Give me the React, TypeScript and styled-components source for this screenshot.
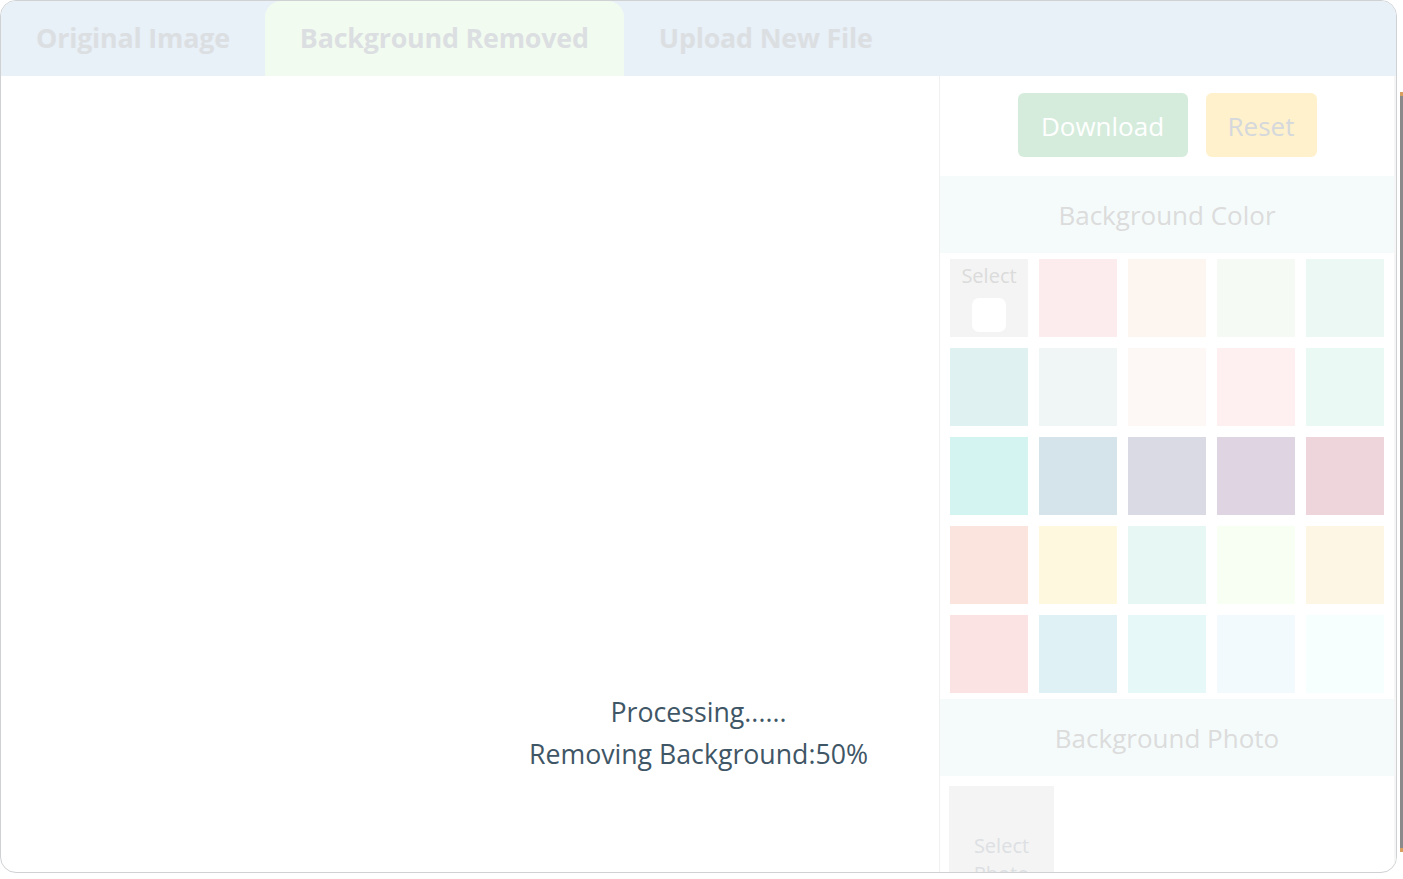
import React from "react";
import styled, { createGlobalStyle } from "styled-components";

const Global = createGlobalStyle`
  html, body { margin: 0; padding: 0; background: #ffffff; }
  body { font-family: "Open Sans", "Noto Sans", sans-serif; overflow: hidden; }
  * { box-sizing: border-box; }
`;

const Page = styled.div`
  display: flex;
  width: 1403px;
  height: 879px;
`;

const Card = styled.div`
  position: relative;
  width: 1397px;
  height: 873px;
  border: 1px solid #cfd1d3;
  border-radius: 16px;
  overflow: hidden;
  display: flex;
  flex-direction: column;
  background: #ffffff;
`;

const Edge = styled.div`
  flex: 1;
  display: flex;
  justify-content: flex-end;
  padding: 92px 0 30px;
`;

const EdgeLine = styled.div`
  width: 3px;
  height: 760px;
  background: #8a8a8a;
  border-top: 4px solid #d8a060;
  border-bottom: 4px solid #d8a060;
`;

const TabBar = styled.div`
  display: flex;
  height: 75px;
  flex-shrink: 0;
  background: #e8f0f8;
`;

const Tab = styled.div<{ $active?: boolean }>`
  display: flex;
  align-items: center;
  padding: 0 35px 2px;
  font-size: 26.85px;
  font-weight: 700;
  color: #dcdfe2;
  background: ${(p) => (p.$active ? "#f2fbf0" : "transparent")};
  border-radius: 16px 16px 0 0;
  letter-spacing: -0.2px;
`;

const Body = styled.div`
  flex: 1;
  display: flex;
  min-height: 0;
`;

const Preview = styled.div`
  width: 939px;
  border-right: 1px solid #f0f0f0;
`;

const Side = styled.div`
  flex: 1;
  overflow: hidden;
  display: flex;
  flex-direction: column;
  border-right: 2px solid #f6f6f6;
`;

const Actions = styled.div`
  display: flex;
  justify-content: center;
  gap: 18px;
  padding: 17px 0 19px;
`;

const Button = styled.div<{ $bg: string; $fg: string; $w: number }>`
  width: ${(p) => p.$w}px;
  height: 64px;
  border-radius: 6px;
  background: ${(p) => p.$bg};
  color: ${(p) => p.$fg};
  font-size: 26px;
  display: flex;
  align-items: center;
  justify-content: center;
  padding-top: 2px;
`;

const SectionHead = styled.div`
  height: 77px;
  flex-shrink: 0;
  background: #f5fbfb;
  color: #dcdcdc;
  font-size: 26px;
  display: flex;
  align-items: center;
  justify-content: center;
`;

const Grid = styled.div`
  display: grid;
  grid-template-columns: repeat(5, 78px);
  grid-auto-rows: 78px;
  column-gap: 11px;
  row-gap: 11px;
  padding: 6px 10px;
  justify-content: space-between;
`;

const Swatch = styled.div<{ $c: string }>`
  background: ${(p) => p.$c};
`;

const SelectCell = styled.div`
  background: #f4f4f4;
  display: flex;
  flex-direction: column;
  align-items: center;
  padding-top: 3px;
  gap: 8px;
  color: #dbdbdb;
  font-size: 20px;
  line-height: 28px;
`;

const WhiteBox = styled.div`
  width: 34px;
  height: 34px;
  border-radius: 7px;
  background: #ffffff;
`;

const PhotoRow = styled.div`
  padding: 10px 9px;
`;

const PhotoCell = styled.div`
  flex-shrink: 0;
  width: 105px;
  height: 148px;
  background: #f4f4f4;
  color: #dde0e3;
  font-size: 20px;
  line-height: 28px;
  display: flex;
  align-items: center;
  justify-content: center;
  text-align: center;
  padding: 0 20px;
`;

const Overlay = styled.div`
  position: absolute;
  left: 0;
  right: 0;
  top: 690px;
  display: flex;
  flex-direction: column;
  align-items: center;
  color: #3f5666;
  font-size: 26.7px;
  line-height: 42px;
`;

const colors = [
  ["#fdeced", "#fdf5f0", "#f6faf4", "#ecf8f4"],
  ["#dff1f0", "#f0f6f6", "#fdf8f5", "#fef0f0", "#eaf9f4"],
  ["#d4f4f2", "#d5e3eb", "#dadae4", "#dfd4e1", "#eed5dc"],
  ["#fbe4dd", "#fef8df", "#e6f7f4", "#f8fff3", "#fef6e4"],
  ["#fbe3e3", "#dff1f5", "#e7f8f8", "#f2fafd", "#f7fefe"],
];

export default function App() {
  return (
    <>
      <Global />
      <Page>
        <Card>
          <TabBar>
            <Tab>Original Image</Tab>
            <Tab $active>Background Removed</Tab>
            <Tab>Upload New File</Tab>
          </TabBar>
          <Body>
            <Preview />
            <Side>
              <Actions>
                <Button $bg="#d5ecdc" $fg="#ffffff" $w={170}>
                  Download
                </Button>
                <Button $bg="#fef1cc" $fg="#d5d8dc" $w={111}>
                  Reset
                </Button>
              </Actions>
              <SectionHead>Background Color</SectionHead>
              <Grid>
                <SelectCell>
                  Select
                  <WhiteBox />
                </SelectCell>
                {colors.flat().map((c, i) => (
                  <Swatch key={i} $c={c} />
                ))}
              </Grid>
              <SectionHead>Background Photo</SectionHead>
              <PhotoRow>
                <PhotoCell>Select Photo</PhotoCell>
              </PhotoRow>
            </Side>
          </Body>
          <Overlay>
            <div>Processing......</div>
            <div>Removing Background:50%</div>
          </Overlay>
        </Card>
        <Edge>
          <EdgeLine />
        </Edge>
      </Page>
    </>
  );
}
